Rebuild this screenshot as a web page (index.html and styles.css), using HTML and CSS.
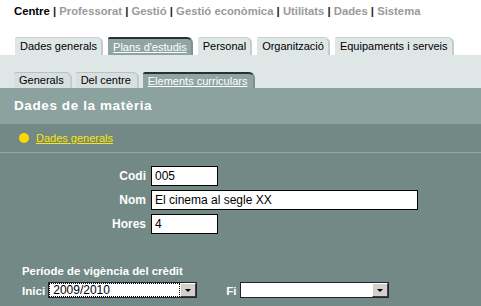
FILE: index.html
```html
<!DOCTYPE html>
<html lang="ca">
<head>
    <meta charset="UTF-8">
    <title>Dades de la matèria</title>
    <link rel="stylesheet" href="styles.css">
</head>
<body>
    <div class="topnav">
        <a class="current" href="#">Centre</a> | <a href="#">Professorat</a> | <a href="#">Gestió</a> | <a href="#">Gestió econòmica</a> | <a href="#">Utilitats</a> | <a href="#">Dades</a> | <a href="#">Sistema</a>
    </div>

    <div class="tabs">
        <a class="tab" href="#">Dades generals</a>
        <a class="tab active" href="#">Plans d'estudis</a>
        <a class="tab" href="#">Personal</a>
        <a class="tab" href="#">Organització</a>
        <a class="tab" href="#">Equipaments i serveis</a>
    </div>
    <div class="band">
        <div class="tabs subtabs">
            <a class="tab" href="#">Generals</a>
            <a class="tab" href="#">Del centre</a>
            <a class="tab active" href="#">Elements curriculars</a>
        </div>
    </div>

    <div class="title">Dades de la matèria</div>

    <div class="content">
        <div class="section-link">
            <span class="dot"></span>
            <a href="#">Dades generals</a>
        </div>

        <form class="form">
            <div class="field">
                <label for="codi">Codi</label>
                <input type="text" id="codi" class="short" value="005">
            </div>
            <div class="field">
                <label for="nom">Nom</label>
                <input type="text" id="nom" class="long" value="El cinema al segle XX">
            </div>
            <div class="field">
                <label for="hores">Hores</label>
                <input type="text" id="hores" class="short" value="4">
            </div>

            <div class="period">
                <div class="period-title">Període de vigència del crèdit</div>
                <div class="period-row">
                    <label>Inici</label>
                    <div class="select focused"><span class="value">2009/2010</span><span class="arrow"></span></div>
                    <label class="fi">Fi</label>
                    <div class="select"><span class="value"></span><span class="arrow"></span></div>
                </div>
            </div>
        </form>
    </div>
</body>
</html>
```

FILE: styles.css
```css
body {
    margin: 0;
    background-color: #fff;
    font-family: "Liberation Sans", Arial, sans-serif;
    font-size: 12px;
}

.topnav {
    padding: 5px 0 0 14px;
    height: 17px;
    font-weight: bold;
    font-size: 11.3px;
    color: #222;
    white-space: nowrap;
}

.topnav a {
    color: #9a9a9a;
    text-decoration: none;
}

.topnav a.current {
    color: #000;
}

.tabs {
    display: flex;
    gap: 5px;
    padding-left: 15px;
    margin-top: 15px;
    white-space: nowrap;
    font-size: 11px;
}

.tab {
    display: block;
    height: 18px;
    line-height: 17px;
    padding: 0 4px 0 5px;
    background-color: #dfe6e6;
    border-top: 1px solid #c9d1d1;
    border-right: 2px solid #c3cbcb;
    border-radius: 2px 6px 0 0;
    color: #000;
    text-decoration: none;
    box-sizing: border-box;
}

.tab.active {
    background-color: #8fa5a1;
    border-top: 2px solid #2b302f;
    border-right: 2px solid #7e918e;
    color: #fff;
    text-decoration: underline;
}

.band {
    background-color: #dfe6e6;
    height: 33px;
    display: flex;
    align-items: flex-end;
}

.subtabs {
    margin-top: 0;
    padding-left: 14px;
    gap: 4px;
}

.subtabs .tab {
    height: 16px;
    line-height: 15px;
    padding: 0 6px 0 5px;
    background-color: #d7dfdf;
    border-top: 1px solid #b9c2c2;
}

.subtabs .tab.active {
    background-color: #8fa5a1;
    border-top: 2px solid #2b302f;
}

.title {
    background-color: #8ca29e;
    height: 36px;
    line-height: 36px;
    padding-left: 14px;
    color: #fff;
    font-weight: bold;
    font-size: 13.5px;
    letter-spacing: 0.6px;
}

.content {
    background-color: #728985;
    height: 182px;
}

.section-link {
    display: flex;
    align-items: center;
    height: 28px;
    padding-left: 19px;
    border-bottom: 1px solid #93a8a4;
}

.dot {
    width: 10px;
    height: 10px;
    border-radius: 50%;
    background-color: #ffd800;
    margin-right: 7px;
}

.section-link a {
    color: #ffe600;
    font-size: 11px;
}

.form {
    padding-top: 13px;
}

.field {
    display: flex;
    align-items: center;
    margin-bottom: 4px;
}

.field label {
    width: 146px;
    text-align: right;
    margin-right: 5px;
    color: #fff;
    font-weight: bold;
    font-size: 12px;
}

.field input {
    height: 20px;
    box-sizing: border-box;
    border: 1px solid #000;
    padding: 0 3px;
    font-family: "Liberation Sans", Arial, sans-serif;
    font-size: 12px;
    color: #000;
    background-color: #fff;
}

.short {
    width: 67px;
}

.long {
    width: 267px;
}

.period {
    padding: 27px 0 0 22px;
    color: #fff;
    font-weight: bold;
}

.period-title {
    font-size: 11.4px;
    height: 17px;
}

.period-row {
    display: flex;
    align-items: center;
    font-size: 11.6px;
}

.period-row label {
    margin-right: 3px;
}

.period-row .fi {
    margin-left: 29px;
    margin-right: 3px;
}

.select {
    display: flex;
    width: 149px;
    height: 16px;
    box-sizing: border-box;
    border: 1px solid #223;
    background-color: #fff;
}

.select .value {
    flex: 1;
    margin: 1px;
    padding-left: 3px;
    line-height: 12px;
    font-weight: normal;
    color: #000;
    font-size: 12px;
}

.select.focused .value {
    outline: 1px dotted #000;
}

.select .arrow {
    position: relative;
    width: 14px;
    background-color: #d4d0c8;
    border-top: 1px solid #fff;
    border-left: 1px solid #fff;
    border-right: 1px solid #404040;
    border-bottom: 1px solid #404040;
}

.select .arrow::after {
    content: "";
    position: absolute;
    left: 4px;
    top: 5px;
    border-left: 3px solid transparent;
    border-right: 3px solid transparent;
    border-top: 3px solid #000;
}
```
